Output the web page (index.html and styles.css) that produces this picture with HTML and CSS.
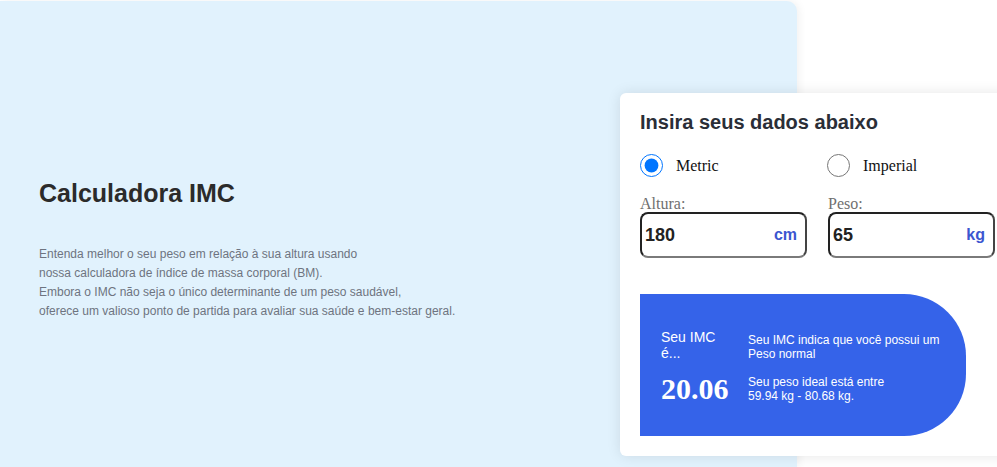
FILE: index.html
```html
<!DOCTYPE html>
<html lang="pt">
<head>
<meta charset="utf-8">
<title>Calculadora IMC</title>
<link rel="stylesheet" href="styles.css">
</head>
<body>
<main class="layout">
  <section class="intro">
    <h1 class="intro-title">Calculadora IMC</h1>
    <p class="intro-text">Entenda melhor o seu peso em relação à sua altura usando<br>nossa calculadora de índice de massa corporal (BM).<br>Embora o IMC não seja o único determinante de um peso saudável,<br>oferece um valioso ponto de partida para avaliar sua saúde e bem-estar geral.</p>
  </section>
  <section class="card">
    <h2 class="card-title">Insira seus dados abaixo</h2>
    <div class="radios">
      <label class="radio"><input type="radio" name="unit" checked><span>Metric</span></label>
      <label class="radio"><input type="radio" name="unit"><span>Imperial</span></label>
    </div>
    <div class="fields">
      <div class="field">
        <span class="field-label">Altura:</span>
        <div class="input-box"><span class="value">180</span><span class="unit">cm</span></div>
      </div>
      <div class="field">
        <span class="field-label">Peso:</span>
        <div class="input-box"><span class="value">65</span><span class="unit">kg</span></div>
      </div>
    </div>
    <div class="result">
      <div class="result-label">Seu IMC é...</div>
      <div class="result-desc result-desc-top">Seu IMC indica que você possui um<br>Peso normal</div>
      <div class="result-value">20.06</div>
      <div class="result-desc">Seu peso ideal está entre<br>59.94 kg - 80.68 kg.</div>
    </div>
  </section>
</main>
</body>
</html>
```
FILE: styles.css
```css
html, body {
  margin: 0;
  padding: 0;
  background: #ffffff;
}
body {
  padding-top: 1px;
  overflow: hidden;
  font-family: "Liberation Sans", Arial, sans-serif;
}
.layout {
  display: grid;
  grid-template-columns: 620px 177px 200px;
  min-height: 466px;
}
.intro {
  grid-column: 1 / 3;
  grid-row: 1;
  background: #e1f2fd;
  border-top-right-radius: 10px;
  box-shadow: 2px 0 8px rgba(0, 0, 0, 0.06);
  padding: 178px 0 0 39px;
}
.intro-title {
  margin: 0;
  font-size: 25px;
  font-weight: bold;
  color: #2b2b2b;
}
.intro-text {
  margin: 37px 0 0;
  font-size: 12px;
  line-height: 19px;
  color: #6e7480;
}
.card {
  grid-column: 2 / 4;
  grid-row: 1;
  align-self: start;
  margin-top: 92px;
  width: 400px;
  box-sizing: border-box;
  background: #ffffff;
  border-radius: 6px;
  box-shadow: 0 0 14px rgba(0, 0, 0, 0.10);
  padding: 18px 20px 20px;
  z-index: 1;
}
.card-title {
  margin: 0;
  font-size: 20px;
  font-weight: bold;
  color: #2a2e37;
}
.radios {
  display: grid;
  grid-template-columns: 187px 1fr;
  margin-top: 20px;
}
.radio {
  display: flex;
  align-items: center;
  font-family: "Liberation Serif", "Times New Roman", serif;
  font-size: 16px;
  color: #111;
}
.radio input {
  width: 23px;
  height: 23px;
  margin: 0 13px 0 0;
}
.fields {
  display: grid;
  grid-template-columns: 167px 167px;
  column-gap: 21px;
  margin-top: 18px;
}
.field {
  display: flex;
  flex-direction: column;
}
.field-label {
  font-family: "Liberation Serif", "Times New Roman", serif;
  font-size: 16px;
  color: #6f6f6f;
  line-height: 17px;
}
.input-box {
  display: flex;
  align-items: center;
  justify-content: space-between;
  height: 46px;
  box-sizing: border-box;
  border: 2px solid;
  border-color: #222 #444 #7a7a7a #222;
  border-radius: 8px;
  padding: 0 8px 0 3px;
}
.value {
  font-size: 18px;
  font-weight: bold;
  color: #222;
}
.unit {
  font-size: 16px;
  font-weight: bold;
  color: #3b56d0;
}
.result {
  display: grid;
  grid-template-columns: 70px 1fr;
  align-content: start;
  column-gap: 17px;
  row-gap: 11px;
  margin-top: 36px;
  width: 326px;
  height: 142px;
  box-sizing: border-box;
  padding: 35px 20px 0 21px;
  background: #3563e9;
  border-radius: 0 62px 62px 0;
  color: #ffffff;
}
.result-label {
  font-size: 14px;
  align-self: end;
}
.result-desc {
  font-size: 12px;
  align-self: center;
}
.result-desc-top {
  align-self: end;
}
.result-value {
  font-family: "Liberation Serif", "Times New Roman", serif;
  font-size: 30px;
  font-weight: bold;
  align-self: center;
}
```
